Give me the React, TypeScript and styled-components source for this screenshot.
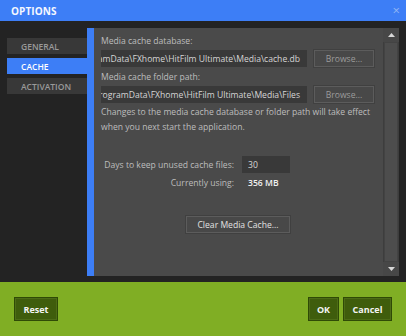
import React from "react"
import styled, { createGlobalStyle } from "styled-components"

const GlobalStyle = createGlobalStyle`
  html, body {
    margin: 0;
    padding: 0;
    background: #232323;
  }
  body {
    font-family: "Open Sans", "DejaVu Sans", sans-serif;
  }
`

const Window = styled.div`
  width: 406px;
  height: 336px;
  display: flex;
  flex-direction: column;
  background: #232323;
  overflow: hidden;
`

const TitleBar = styled.div`
  height: 21px;
  flex: 0 0 21px;
  background: #3d7ef6;
  display: flex;
  align-items: center;
  justify-content: space-between;
  padding: 0 6px 0 11px;
`

const Title = styled.div`
  color: #f4f7ff;
  font-size: 10px;
  font-weight: 700;
  letter-spacing: 0.01em;
`

const Close = styled.div`
  color: #8fb4f5;
  font-size: 13px;
  line-height: 1;
`

const Body = styled.div`
  flex: 1;
  display: flex;
  padding: 7px 7px 6px 7px;
`

const Nav = styled.div`
  width: 80px;
  padding-top: 10px;
  display: flex;
  flex-direction: column;
  gap: 4px;
`

const NavItem = styled.div<{ $active?: boolean }>`
  height: 16px;
  display: flex;
  align-items: center;
  padding-left: 14px;
  background: ${(p) => (p.$active ? "#3d7ef6" : "#383838")};
  color: ${(p) => (p.$active ? "#ffffff" : "#9a9a9a")};
  font-size: 8.5px;
  font-weight: 600;
`

const Stripe = styled.div`
  width: 7px;
  background: #3d7ef6;
`

const Panel = styled.div`
  flex: 1;
  display: flex;
  background: #4a4a4a;
`

const Content = styled.div`
  flex: 1;
  padding: 7px 0 0 7px;
  display: flex;
  flex-direction: column;
  color: #bdbdbd;
  font-size: 8.6px;
  min-width: 0;
`

const Label = styled.div<{ $gap?: number }>`
  line-height: 12px;
  margin-top: ${(p) => p.$gap ?? 0}px;
`

const PathRow = styled.div`
  display: flex;
  gap: 7px;
  margin-top: 3px;
`

const PathBox = styled.div`
  width: 199px;
  height: 17px;
  padding-right: 7px;
  background: #393939;
  color: #d6d6d6;
  display: flex;
  align-items: center;
  justify-content: flex-end;
  white-space: nowrap;
  overflow: hidden;
`

const Button = styled.div<{ $dim?: boolean }>`
  height: 15px;
  display: flex;
  align-items: center;
  justify-content: center;
  background: #484848;
  border: 1px solid #5c5c5c;
  box-shadow: 0 0 0 1px #404040;
  color: ${(p) => (p.$dim ? "#9c9c9c" : "#e2e2e2")};
  font-size: 8.6px;
`

const Note = styled.div`
  line-height: 15px;
  margin-top: 2px;
  width: 280px;
`

const Grid = styled.div`
  margin-top: 21px;
  display: grid;
  grid-template-columns: 133px 48px;
  column-gap: 8px;
  align-items: center;
`

const GridLabel = styled.div`
  text-align: right;
`

const NumberBox = styled.div`
  height: 17px;
  background: #393939;
  color: #d6d6d6;
  display: flex;
  align-items: center;
  padding-left: 6px;
`

const Value = styled.div`
  color: #f0f0f0;
  font-weight: 600;
  padding-left: 6px;
  line-height: 20px;
`

const ClearWrap = styled.div`
  grid-column: 1 / span 2;
  justify-self: end;
  margin-top: 23px;
`

const Scrollbar = styled.div`
  width: 16px;
  display: flex;
  flex-direction: column;
  background: #3d3d3d;
`

const ScrollBtn = styled.div`
  height: 14px;
  display: flex;
  align-items: center;
  justify-content: center;
  background: #474747;
`

const Track = styled.div`
  flex: 1;
  margin: 0 1px;
  background: #4d4d4d;
  border: 1px solid #434343;
`

const Footer = styled.div`
  height: 54px;
  flex: 0 0 54px;
  background: #80ae24;
  display: flex;
  align-items: flex-start;
  padding: 15px 14px 0 14px;
  box-sizing: border-box;
  gap: 4px;
`

const FooterButton = styled.div<{ $w: number }>`
  width: ${(p) => p.$w}px;
  height: 24px;
  box-sizing: border-box;
  display: flex;
  align-items: center;
  justify-content: center;
  background: #3f5d0c;
  border: 1px solid #2f4a06;
  box-shadow: inset 0 0 0 1px #4d6c17;
  color: #f4f4f4;
  font-size: 9px;
  font-weight: 700;
`

const Spacer = styled.div`
  flex: 1;
`

const Arrow = ({ up }: { up?: boolean }) => (
  <svg width="7" height="4" viewBox="0 0 7 4">
    <path d={up ? "M0 4 L3.5 0 L7 4 Z" : "M0 0 L3.5 4 L7 0 Z"} fill="#d8d8d8" />
  </svg>
)

const App = () => {
  return (
    <Window>
      <GlobalStyle />
      <TitleBar>
        <Title>OPTIONS</Title>
        <Close>×</Close>
      </TitleBar>
      <Body>
        <Nav>
          <NavItem>GENERAL</NavItem>
          <NavItem $active>CACHE</NavItem>
          <NavItem>ACTIVATION</NavItem>
        </Nav>
        <Stripe />
        <Panel>
          <Content>
            <Label>Media cache database:</Label>
            <PathRow>
              <PathBox>C:\ProgramData\FXhome\HitFilm Ultimate\Media\cache.db</PathBox>
              <Button $dim style={{ width: 58 }}>Browse...</Button>
            </PathRow>
            <Label $gap={4}>Media cache folder path:</Label>
            <PathRow>
              <PathBox>C:\ProgramData\FXhome\HitFilm Ultimate\Media\Files</PathBox>
              <Button $dim style={{ width: 58 }}>Browse...</Button>
            </PathRow>
            <Note>
              Changes to the media cache database or folder path will take effect
              when you next start the application.
            </Note>
            <Grid>
              <GridLabel>Days to keep unused cache files:</GridLabel>
              <NumberBox>30</NumberBox>
              <GridLabel>Currently using:</GridLabel>
              <Value>356 MB</Value>
              <ClearWrap>
                <Button style={{ width: 102 }}>Clear Media Cache...</Button>
              </ClearWrap>
            </Grid>
          </Content>
          <Scrollbar>
            <ScrollBtn>
              <Arrow up />
            </ScrollBtn>
            <Track />
            <ScrollBtn>
              <Arrow />
            </ScrollBtn>
          </Scrollbar>
        </Panel>
      </Body>
      <Footer>
        <FooterButton $w={44}>Reset</FooterButton>
        <Spacer />
        <FooterButton $w={31}>OK</FooterButton>
        <FooterButton $w={49}>Cancel</FooterButton>
      </Footer>
    </Window>
  )
}

export default App
